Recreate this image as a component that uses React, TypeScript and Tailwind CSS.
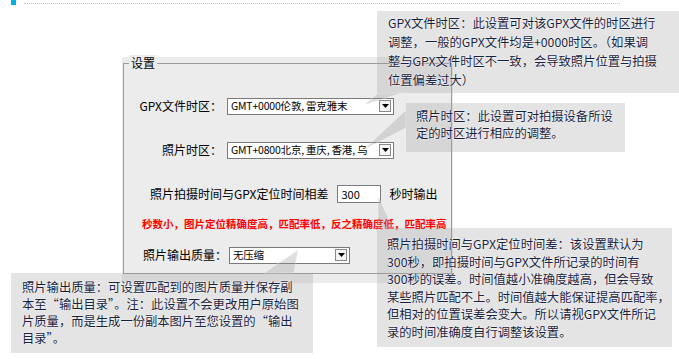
const cjk = { fontFamily: '"Noto Sans CJK SC", "Noto Sans", sans-serif' }

function Select({ text, width }: { text: string; width: string }) {
  return (
    <div className={`flex items-center justify-between h-[17px] bg-white border border-[#7a7a7a] pl-[3px] pr-[2px] ${width}`}>
      <span className="text-[10.5px] leading-[14px] text-black whitespace-nowrap tracking-[-0.2px]">{text}</span>
      <span className="flex items-center justify-center w-[12px] h-[12px] border border-[#8a8a8a] bg-[#f4f4f4] shrink-0">
        <svg width="7" height="4" viewBox="0 0 7 4">
          <path d="M0 0h7L3.5 4z" fill="#000" />
        </svg>
      </span>
    </div>
  )
}

function Callout({ className, lines }: { className: string; lines: string[] }) {
  return (
    <div
      className={`absolute bg-[rgba(150,150,150,0.26)] text-[12.3px] text-[#18223c] whitespace-nowrap [text-shadow:0_0_2px_#fff,0_0_1px_#fff] ${className}`}
      style={cjk}
    >
      {lines.map((l) => (
        <div key={l}>{l}</div>
      ))}
    </div>
  )
}

export default function App() {
  return (
    <div className="relative w-[679px] h-[359px] bg-white overflow-hidden" style={cjk}>
      <div className="flex items-start">
        <div className="ml-[11px] w-[5px] h-[5px] bg-[#00b1e8]" />
        <div className="ml-[8px] mt-[3px] w-[596px] border-t border-dotted border-[#c4c4c4]" />
      </div>

      <div className="ml-[122px] mt-[52px] w-[331px] h-[226px] bg-[#ececec] pt-[6px] pl-px">
        <div className="relative w-[329px] h-[211px] border border-[#9c9c9c] text-[12px] text-black">
          <span className="absolute -top-[9px] left-[5px] px-[2px] bg-[#ececec] leading-[16px]">设置</span>

          <div className="flex items-center mt-[33px]">
            <span className="w-[98px] text-right whitespace-nowrap">GPX文件时区：</span>
            <div className="ml-[5px]">
              <Select text="GMT+0000伦敦, 雷克雅末" width="w-[167px]" />
            </div>
          </div>

          <div className="flex items-center mt-[26px]">
            <span className="w-[98px] text-right whitespace-nowrap">照片时区：</span>
            <div className="ml-[5px]">
              <Select text="GMT+0800北京, 重庆, 香港, 乌" width="w-[167px]" />
            </div>
          </div>

          <div className="flex items-center mt-[26px] pl-[26px] whitespace-nowrap">
            <span>照片拍摄时间与GPX定位时间相差</span>
            <div className="ml-[9px] w-[44px] h-[18px] bg-white border border-[#7a7a7a] flex items-center pl-[3px] text-[11px]">
              300
            </div>
            <span className="ml-[8px]">秒时输出</span>
          </div>

          <div className="mt-[14px] pl-[18px] text-[10.5px] leading-[14px] text-[#ff0000] font-bold whitespace-nowrap">
            秒数小，图片定位精确度高，匹配率低，反之精确度低，匹配率高
          </div>

          <div className="flex items-center mt-[15px] pl-[19px] whitespace-nowrap">
            <span>照片输出质量：</span>
            <div className="ml-[2px]">
              <Select text="无压缩" width="w-[121px]" />
            </div>
          </div>
        </div>
      </div>

      <svg className="absolute inset-0 pointer-events-none" width="679" height="359" viewBox="0 0 679 359">
        <g fill="rgba(150,150,150,0.3)" stroke="rgba(255,255,255,0.6)" strokeWidth="0.6">
          <polygon points="364,105 378,93 402,93" />
          <polygon points="363,150 406,110 406,128" />
          <polygon points="378,196 378,228 393,228" />
          <polygon points="298,250 264,273 294,273" />
        </g>
      </svg>

      <Callout
        className="left-[377px] top-[11px] w-[303px] h-[82px] pl-[11px] pt-[3px] leading-[19px]"
        lines={[
          'GPX文件时区：此设置可对该GPX文件的时区进行',
          '调整，一般的GPX文件均是+0000时区。（如果调',
          '整与GPX文件时区不一致，会导致照片位置与拍摄',
          '位置偏差过大）',
        ]}
      />
      <Callout
        className="left-[406px] top-[103px] w-[219px] h-[49px] pl-[10px] pt-[5px] leading-[17px]"
        lines={['照片时区：此设置可对拍摄设备所设', '定的时区进行相应的调整。']}
      />
      <Callout
        className="left-[377px] top-[228px] w-[295px] h-[119px] pl-[10px] pt-[8px] leading-[17.5px]"
        lines={[
          '照片拍摄时间与GPX定位时间差：该设置默认为',
          '300秒，即拍摄时间与GPX文件所记录的时间有',
          '300秒的误差。时间值越小准确度越高，但会导致',
          '某些照片匹配不上。时间值越大能保证提高匹配率，',
          '但相对的位置误差会变大。所以请视GPX文件所记',
          '录的时间准确度自行调整该设置。',
        ]}
      />
      <Callout
        className="left-[11px] top-[273px] w-[302px] h-[80px] pl-[11px] pt-[6px] leading-[17px]"
        lines={[
          '照片输出质量：可设置匹配到的图片质量并保存副',
          '本至“输出目录”。注：此设置不会更改用户原始图',
          '片质量，而是生成一份副本图片至您设置的“输出',
          '目录”。',
        ]}
      />
    </div>
  )
}
